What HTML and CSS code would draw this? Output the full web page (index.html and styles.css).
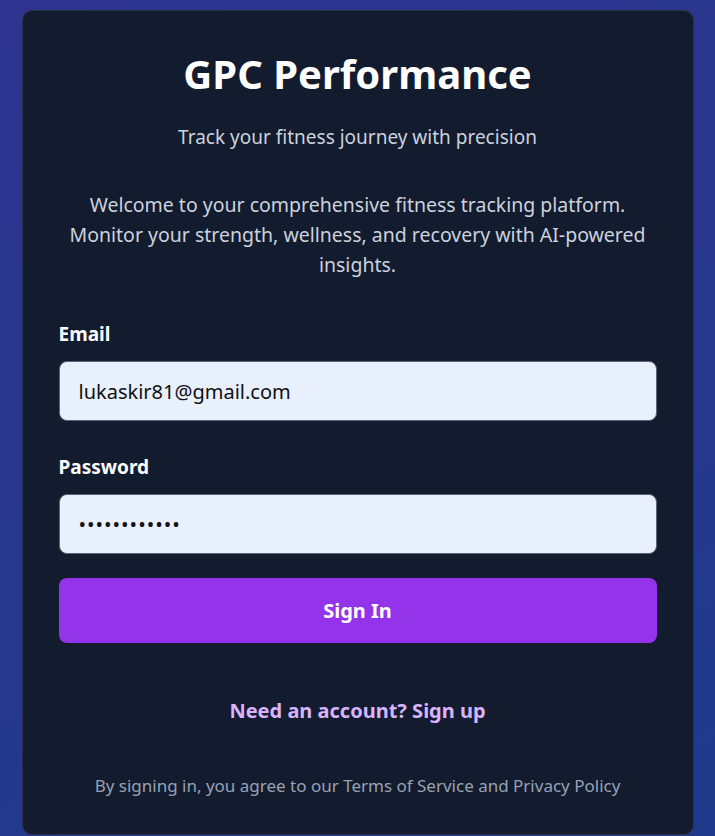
FILE: index.html
```html
<!DOCTYPE html>
<html>
<head>
<meta charset="utf-8">
<link rel="stylesheet" href="styles.css">
</head>
<body>
<main class="page">
  <section class="card">
    <h1 class="title">GPC Performance</h1>
    <p class="subtitle">Track your fitness journey with precision</p>
    <p class="intro">Welcome to your comprehensive fitness tracking platform. Monitor your strength, wellness, and recovery with AI-powered insights.</p>
    <form class="form">
      <label class="field">
        <span class="label">Email</span>
        <input class="input" type="email" value="lukaskir81@gmail.com">
      </label>
      <label class="field">
        <span class="label">Password</span>
        <input class="input input-pass" type="password" value="password1234">
      </label>
      <button class="btn" type="button">Sign In</button>
    </form>
    <a class="switch" href="#">Need an account? Sign up</a>
    <p class="legal">By signing in, you agree to our Terms of Service and Privacy Policy</p>
  </section>
</main>
</body>
</html>
```
FILE: styles.css
```css
* { box-sizing: border-box; }
html, body { margin: 0; height: 100%; }
body {
  font-family: "Noto Sans", "Open Sans", sans-serif;
  background: linear-gradient(160deg, #2e3490 0%, #27378c 50%, #1f3a8a 100%);
  overflow: hidden;
}
.page {
  display: flex;
  justify-content: center;
  align-items: flex-start;
  padding-top: 10px;
  min-height: 100%;
}
.card {
  width: 672px;
  background: #131b2f;
  border: 1px solid #2b3447;
  border-radius: 10px;
  padding: 32px 36px 36px;
  display: flex;
  flex-direction: column;
  align-items: stretch;
  text-align: center;
}
.title {
  margin: 6px 0 0;
  font-size: 40px;
  line-height: 50px;
  font-weight: 700;
  color: #ffffff;
  letter-spacing: 0;
}
.subtitle {
  margin: 24px 0 0;
  font-size: 19px;
  line-height: 28px;
  color: #cbd2dd;
}
.intro {
  margin: 39px 0 0;
  font-size: 19.5px;
  line-height: 30px;
  color: #cbd2dd;
}
.form {
  margin-top: 41px;
  display: flex;
  flex-direction: column;
  text-align: left;
}
.field {
  display: flex;
  flex-direction: column;
  margin-bottom: 33px;
}
.field:last-of-type { margin-bottom: 24px; }
.label {
  font-size: 19px;
  line-height: 26px;
  font-weight: 700;
  color: #ffffff;
  margin-bottom: 14px;
}
.input {
  height: 60px;
  border: 1px solid #5b6478;
  border-radius: 8px;
  background: #e8f0fe;
  padding: 0 19px;
  font-family: inherit;
  font-size: 20px;
  color: #111111;
  outline: none;
}
.input-pass { letter-spacing: 1px; }
.btn {
  height: 65px;
  border: none;
  border-radius: 8px;
  background: #9333ea;
  color: #ffffff;
  font-family: inherit;
  font-size: 20px;
  font-weight: 700;
}
.switch {
  margin-top: 53px;
  font-size: 20px;
  line-height: 30px;
  font-weight: 700;
  color: #d8b4fe;
  text-decoration: none;
}
.legal {
  margin: 48px 0 0;
  font-size: 17px;
  line-height: 24px;
  color: #98a2b3;
}
```
